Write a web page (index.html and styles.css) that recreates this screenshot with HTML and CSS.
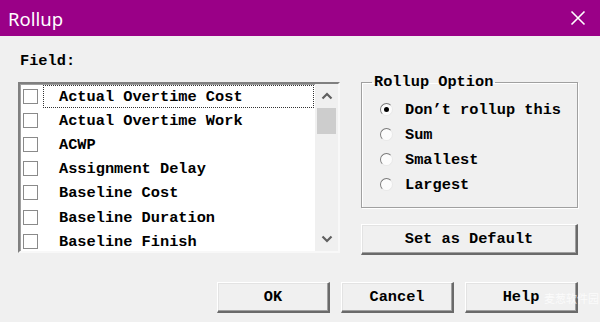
FILE: index.html
```html
<!DOCTYPE html>
<html>
<head>
<meta charset="utf-8">
<link rel="stylesheet" href="styles.css">
</head>
<body>
<div class="dialog">
  <div class="titlebar">
    <span class="title">Rollup</span>
    <svg class="close" width="16" height="16" viewBox="0 0 16 16"><path d="M1.5 1.5L14.5 14.5M14.5 1.5L1.5 14.5" stroke="#fff" stroke-width="1.6" fill="none"/></svg>
  </div>
  <div class="content">
    <div class="main">
      <div class="left">
        <div class="label">Field:</div>
        <div class="list">
          <div class="items">
            <div class="row"><span class="cb"></span><span class="txt focus">Actual Overtime Cost</span></div>
            <div class="row"><span class="cb"></span><span class="txt">Actual Overtime Work</span></div>
            <div class="row"><span class="cb"></span><span class="txt">ACWP</span></div>
            <div class="row"><span class="cb"></span><span class="txt">Assignment Delay</span></div>
            <div class="row"><span class="cb"></span><span class="txt">Baseline Cost</span></div>
            <div class="row"><span class="cb"></span><span class="txt">Baseline Duration</span></div>
            <div class="row"><span class="cb"></span><span class="txt">Baseline Finish</span></div>
          </div>
          <div class="scrollbar">
            <div class="arrow"><svg width="12" height="8" viewBox="0 0 12 8"><path d="M1.5 6.5L6 2L10.5 6.5" stroke="#606060" stroke-width="2.2" fill="none"/></svg></div>
            <div class="thumb"></div>
            <div class="track"></div>
            <div class="arrow"><svg width="12" height="8" viewBox="0 0 12 8"><path d="M1.5 1.5L6 6L10.5 1.5" stroke="#606060" stroke-width="2.2" fill="none"/></svg></div>
          </div>
        </div>
      </div>
      <div class="right">
        <fieldset class="group">
          <legend>Rollup Option</legend>
          <div class="opt"><span class="radio on"></span>Don’t rollup this</div>
          <div class="opt"><span class="radio"></span>Sum</div>
          <div class="opt"><span class="radio"></span>Smallest</div>
          <div class="opt"><span class="radio"></span>Largest</div>
        </fieldset>
        <div class="btn wide">Set as Default</div>
      </div>
    </div>
    <div class="buttons">
      <div class="btn">OK</div>
      <div class="btn">Cancel</div>
      <div class="btn">Help</div>
    </div>
  </div>
  <div class="watermark">麦葱软件园</div>
</div>
</body>
</html>
```
FILE: styles.css
```css
* { box-sizing: border-box; }
html, body { margin: 0; padding: 0; }
body { width: 600px; height: 322px; overflow: hidden; background: #f0f0f0; }
.dialog { position: relative; width: 600px; height: 322px; background: #f0f0f0;
  font-family: "Liberation Mono", "DejaVu Sans Mono", monospace; font-size: 15.3px; font-weight: bold; color: #000; }
.titlebar { height: 36px; background: #9a0087; display: flex; align-items: center; justify-content: space-between; padding: 0 14px 0 8px; }
.title { font-family: "Noto Sans", "Open Sans", sans-serif; font-weight: normal; font-size: 18.5px; color: #fff; }
.close { display: block; }
.content { padding: 16px 22px 0 18px; }
.main { display: flex; gap: 21px; }
.left { width: 322px; }
.label { height: 18px; line-height: 18px; margin-bottom: 12px; padding-left: 2px; font-weight: bold; }
.list { height: 171px; display: flex; background: #fff;
  border-top: 2px solid #808080; border-left: 2px solid #808080; border-right: 2px solid #f8f8f8; border-bottom: 2px solid #f8f8f8;
  box-shadow: inset 1px 1px 0 #a0a0a0; }
.items { flex: 1; padding-top: 0; }
.row { height: 24.2px; display: flex; align-items: center; }
.cb { width: 15px; height: 15px; border: 1px solid #8a8a8a; background: #fff; margin-left: 3px; margin-right: 5px; flex: none; }
.txt { flex: 1; height: 23px; line-height: 22px; padding-left: 15px; border: 1px dotted transparent; margin-right: 1px; white-space: nowrap; }
.txt.focus { border-color: #333; }
.scrollbar { width: 23px; background: #f0f0f0; display: flex; flex-direction: column; }
.arrow { height: 24px; display: flex; align-items: center; justify-content: center; }
.thumb { height: 26px; margin: 0 2px; background: #cdcdcd; }
.track { flex: 1; }
.right { width: 217px; display: flex; flex-direction: column; padding-top: 21px; }
.group { margin: 0; padding: 6px 0 0 18px; height: 135px; border: 1px solid #a0a0a0; box-shadow: 1px 1px 0 #fff, inset 1px 1px 0 #fff; }
.group legend { padding: 0 2px; margin-left: -8px; line-height: 18px; }
.opt { height: 25px; display: flex; align-items: center; }
.radio { width: 13px; height: 13px; border-radius: 50%; background: #fcfcfc; margin-right: 12px; position: relative;
  border: 1px solid; border-color: #7a7a7a #e8e8e8 #e8e8e8 #7a7a7a; }
.radio.on::after { content: ""; position: absolute; left: 3px; top: 3px; width: 5px; height: 5px; border-radius: 50%; background: #000; }
.btn { height: 31px; display: flex; align-items: center; justify-content: center; background: #f0f0f0;
  border-top: 1px solid #fff; border-left: 1px solid #fff; border-right: 2px solid #6a6a6a; border-bottom: 2px solid #6a6a6a;
  box-shadow: inset -1px -1px 0 #a0a0a0, inset 1px 1px 0 #e3e3e3; }
.btn.wide { margin-top: 16px; }
.buttons { display: flex; justify-content: flex-end; gap: 11px; margin-top: 27px; }
.buttons .btn { width: 113px; }
.watermark { position: absolute; left: 544px; bottom: 16px; white-space: nowrap; font-family: "Noto Sans CJK SC", sans-serif; font-size: 11px; font-weight: normal; color: rgba(255,255,255,0.75); }
```
